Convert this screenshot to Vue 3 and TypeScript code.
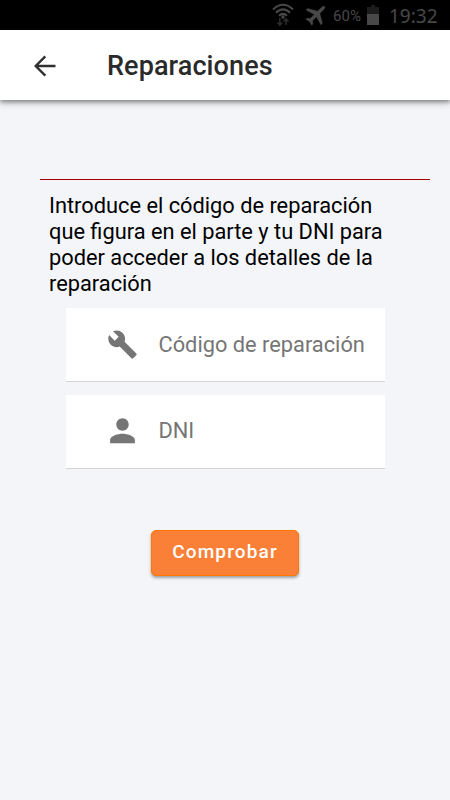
<script setup lang="ts">
import { ref } from 'vue'

interface Field {
  id: string
  label: string
  icon: string
  viewBox: string
}

const wrench =
  'M22.7 19l-9.1-9.1c.9-2.3.4-5-1.5-6.9-2-2-5-2.4-7.4-1.3L9 6 6 9 1.6 4.7C.4 7.1.9 10.1 2.9 12.1c1.9 1.9 4.6 2.4 6.9 1.5l9.1 9.1c.4.4 1 .4 1.4 0l2.3-2.3c.5-.4.5-1.1.1-1.4z'
const person =
  'M12 12c2.21 0 4-1.79 4-4s-1.79-4-4-4-4 1.79-4 4 1.79 4 4 4zm0 2c-2.67 0-8 1.34-8 4v2h16v-2c0-2.66-5.33-4-8-4z'

const fields: Field[] = [
  { id: 'codigo', label: 'Código de reparación', icon: wrench, viewBox: '0 0 24 24' },
  { id: 'dni', label: 'DNI', icon: person, viewBox: '2 2.5 20 20' },
]
const values = ref<Record<string, string>>({ codigo: '', dni: '' })
</script>

<template>
  <div class="screen">
    <div class="status">
      <svg class="wifi" viewBox="0 0 22 24">
        <g fill="none" stroke="#484848" stroke-width="2">
          <path d="M1 6.500Q11 -3 21 6.500" />
          <path d="M4 9.800Q11 3 18 9.800" />
          <path d="M7 12.800Q11 9 15 12.800" />
        </g>
        <circle cx="11" cy="14" r="1.700" fill="#484848" />
        <path d="M7.800 15v7M5.300 19.500l2.500 2.700 2.500-2.700M14 22v-6M11.500 18.500l2.500-2.700 2.500 2.700" fill="none" stroke="#292929" stroke-width="1.700" />
      </svg>
      <svg class="plane" viewBox="0 0 24 24">
        <path transform="rotate(45 12 12)" d="M22 16v-2l-8.500-5V3.500C13.500 2.400 12.800 1 12 1s-1.500 1.400-1.500 2.500V9L2 14v2l8.500-2.500V19L8 21v1.500l4-1 4 1V21l-2.500-2v-5.500z" />
      </svg>
      <span class="percent">60%</span>
      <svg class="battery" viewBox="0 0 12 20">
        <path d="M4 0h4v2h4v7H0V2h4z" fill="#1c1c1c" />
        <path d="M0 9h12v11H0z" fill="#484848" />
      </svg>
      <span class="clock">19:32</span>
    </div>
    <header class="bar">
      <button class="back" type="button" aria-label="Atrás">
        <svg viewBox="0 0 22 22"><path d="M21.500 11H2M11.300 1.300L1.700 11l9.600 9.700" /></svg>
      </button>
      <h1>Reparaciones</h1>
    </header>
    <main>
      <div class="rule"></div>
      <p class="intro">
        Introduce el código de reparación<br />que figura en el parte y tu DNI para<br />poder acceder a los detalles de la<br />reparación
      </p>
      <form @submit.prevent>
        <label v-for="f in fields" :key="f.id" class="field">
          <svg :viewBox="f.viewBox"><path :d="f.icon" /></svg>
          <input v-model="values[f.id]" type="text" :placeholder="f.label" />
        </label>
        <button class="submit" type="submit">Comprobar</button>
      </form>
    </main>
  </div>
</template>

<style>
body {
  background: #f3f5f9;
}
</style>

<style scoped>
.screen {
  box-sizing: border-box;
  width: 450px;
  height: 800px;
  overflow: hidden;
  background: #f3f5f9;
  font-family: Roboto, sans-serif;
}
.status {
  display: flex;
  justify-content: flex-end;
  height: 30px;
  background: #000;
  color: #484848;
}
.wifi {
  width: 22px;
  height: 24px;
  margin: 3px 10px 0 0;
}
.plane {
  width: 25px;
  height: 25px;
  margin: 2px 4px 0 0;
  fill: #484848;
  stroke: #484848;
  stroke-width: 0.4;
}
.percent {
  width: 31px;
  margin-right: 3px;
  font-size: 15px;
  letter-spacing: 0.1px;
  line-height: 32px;
}
.battery {
  width: 12px;
  height: 20px;
  margin: 5px 10px 0 0;
}
.clock {
  width: 48px;
  margin-right: 13px;
  font-family: 'Noto Sans', sans-serif;
  font-size: 19px;
  line-height: 32px;
}
.bar {
  position: relative;
  display: flex;
  align-items: center;
  height: 70px;
  background: #fff;
  box-shadow: 0 2px 4px rgba(0, 0, 0, 0.35), 0 3px 8px rgba(0, 0, 0, 0.2);
}
.back {
  display: flex;
  width: 22px;
  margin: 1px 0 0 34px;
  padding: 0;
  border: 0;
  background: none;
}
.back svg {
  width: 22px;
  height: 22px;
  fill: none;
  stroke: #303030;
  stroke-width: 2.4;
}
h1 {
  margin: 2px 0 0 51px;
  color: #2a2a2a;
  font-size: 27px;
  font-weight: 500;
  letter-spacing: 0.1px;
  line-height: 34px;
}
main {
  padding: 79px 20px 0 40px;
}
.rule {
  height: 1px;
  background: #a50000;
}
.intro {
  margin: 13px 0 11px 9px;
  color: #000;
  font-size: 21.8px;
  line-height: 26px;
  white-space: nowrap;
}
form {
  display: flex;
  flex-direction: column;
  width: 319px;
  margin-left: 26px;
}
.field {
  display: flex;
  align-items: center;
  box-sizing: border-box;
  height: 74px;
  margin-bottom: 12.5px;
  padding-left: 41px;
  border-bottom: 1px solid #d4d4d6;
  background: #fff;
}
.field svg {
  flex: none;
  width: 31px;
  height: 31px;
  fill: #757575;
}
.field input {
  min-width: 0;
  flex: 1;
  margin-left: 20.5px;
  padding: 0.5px 0 0;
  border: 0;
  outline: 0;
  background: none;
  color: #333;
  font: 21.8px/30px Roboto, sans-serif;
}
.field input::placeholder {
  color: #757575;
  opacity: 1;
}
.submit {
  width: 148px;
  height: 46px;
  margin: 49px 0 0 85px;
  padding: 0 0 3px;
  border: 1px solid #ff7800;
  border-radius: 5px;
  background: #fa8038;
  box-shadow: 0 2px 3px rgba(0, 0, 0, 0.35);
  color: #fff;
  font: 500 19px/40px Roboto, sans-serif;
  letter-spacing: 1.15px;
}
</style>
